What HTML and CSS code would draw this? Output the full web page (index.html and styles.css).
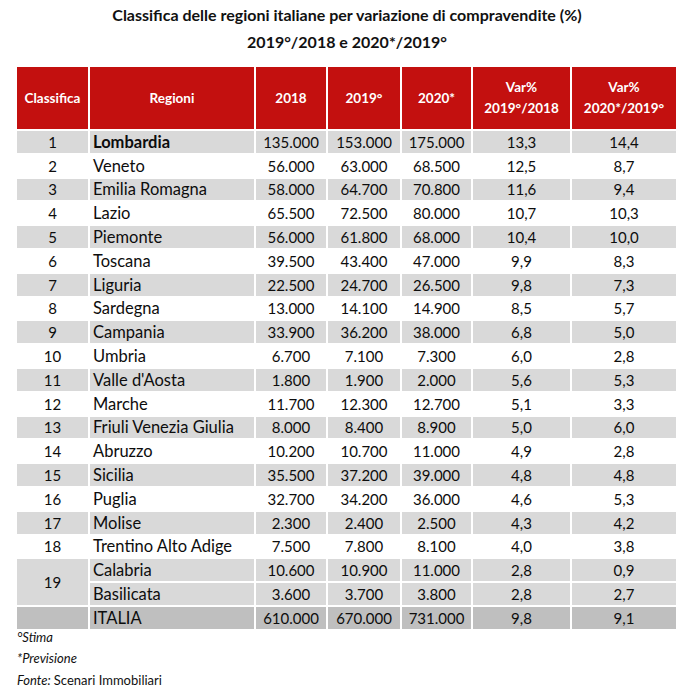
FILE: index.html
```html
<!DOCTYPE html>
<html lang="it">
<head>
<meta charset="utf-8">
<title>Classifica regioni</title>
<link rel="stylesheet" href="styles.css">
</head>
<body>
<div class="page">
  <h1 class="title">Classifica delle regioni italiane per variazione di compravendite (%)<br>2019°/2018 e 2020*/2019°</h1>
  <table class="tbl">
    <colgroup>
      <col class="c1"><col class="c2"><col class="c3"><col class="c4"><col class="c5"><col class="c6"><col class="c7">
    </colgroup>
    <thead>
      <tr>
        <th>Classifica</th><th>Regioni</th><th>2018</th><th>2019°</th><th>2020*</th><th>Var%<br>2019°/2018</th><th>Var%<br>2020*/2019°</th>
      </tr>
    </thead>
    <tbody>
      <tr class="g"><td>1</td><td class="reg b">Lombardia</td><td>135.000</td><td>153.000</td><td>175.000</td><td>13,3</td><td>14,4</td></tr>
      <tr><td>2</td><td class="reg">Veneto</td><td>56.000</td><td>63.000</td><td>68.500</td><td>12,5</td><td>8,7</td></tr>
      <tr class="g"><td>3</td><td class="reg">Emilia Romagna</td><td>58.000</td><td>64.700</td><td>70.800</td><td>11,6</td><td>9,4</td></tr>
      <tr><td>4</td><td class="reg">Lazio</td><td>65.500</td><td>72.500</td><td>80.000</td><td>10,7</td><td>10,3</td></tr>
      <tr class="g"><td>5</td><td class="reg">Piemonte</td><td>56.000</td><td>61.800</td><td>68.000</td><td>10,4</td><td>10,0</td></tr>
      <tr><td>6</td><td class="reg">Toscana</td><td>39.500</td><td>43.400</td><td>47.000</td><td>9,9</td><td>8,3</td></tr>
      <tr class="g"><td>7</td><td class="reg">Liguria</td><td>22.500</td><td>24.700</td><td>26.500</td><td>9,8</td><td>7,3</td></tr>
      <tr><td>8</td><td class="reg">Sardegna</td><td>13.000</td><td>14.100</td><td>14.900</td><td>8,5</td><td>5,7</td></tr>
      <tr class="g"><td>9</td><td class="reg">Campania</td><td>33.900</td><td>36.200</td><td>38.000</td><td>6,8</td><td>5,0</td></tr>
      <tr><td>10</td><td class="reg">Umbria</td><td>6.700</td><td>7.100</td><td>7.300</td><td>6,0</td><td>2,8</td></tr>
      <tr class="g"><td>11</td><td class="reg">Valle d'Aosta</td><td>1.800</td><td>1.900</td><td>2.000</td><td>5,6</td><td>5,3</td></tr>
      <tr><td>12</td><td class="reg">Marche</td><td>11.700</td><td>12.300</td><td>12.700</td><td>5,1</td><td>3,3</td></tr>
      <tr class="g"><td>13</td><td class="reg">Friuli Venezia Giulia</td><td>8.000</td><td>8.400</td><td>8.900</td><td>5,0</td><td>6,0</td></tr>
      <tr><td>14</td><td class="reg">Abruzzo</td><td>10.200</td><td>10.700</td><td>11.000</td><td>4,9</td><td>2,8</td></tr>
      <tr class="g"><td>15</td><td class="reg">Sicilia</td><td>35.500</td><td>37.200</td><td>39.000</td><td>4,8</td><td>4,8</td></tr>
      <tr><td>16</td><td class="reg">Puglia</td><td>32.700</td><td>34.200</td><td>36.000</td><td>4,6</td><td>5,3</td></tr>
      <tr class="g"><td>17</td><td class="reg">Molise</td><td>2.300</td><td>2.400</td><td>2.500</td><td>4,3</td><td>4,2</td></tr>
      <tr><td>18</td><td class="reg">Trentino Alto Adige</td><td>7.500</td><td>7.800</td><td>8.100</td><td>4,0</td><td>3,8</td></tr>
      <tr class="g"><td rowspan="2">19</td><td class="reg">Calabria</td><td>10.600</td><td>10.900</td><td>11.000</td><td>2,8</td><td>0,9</td></tr>
      <tr class="g"><td class="reg">Basilicata</td><td>3.600</td><td>3.700</td><td>3.800</td><td>2,8</td><td>2,7</td></tr>
      <tr class="tot"><td></td><td class="reg">ITALIA</td><td>610.000</td><td>670.000</td><td>731.000</td><td>9,8</td><td>9,1</td></tr>
    </tbody>
  </table>
  <div class="notes">
    <p>°Stima</p>
    <p>*Previsione</p>
    <p>Fonte: <span class="src">Scenari Immobiliari</span></p>
  </div>
</div>
</body>
</html>
```

FILE: styles.css
```css
html, body {
  margin: 0;
  padding: 0;
  background: #ffffff;
}

.page {
  width: 694px;
  padding: 1px 0 0 15px;
  box-sizing: border-box;
  font-family: Lato, "Open Sans", sans-serif;
  color: #0d0d0d;
}

.title {
  margin: 0 0 10px -15px;
  width: 694px;
  text-align: center;
  font-size: 16px;
  font-weight: 700;
  line-height: 27px;
  color: #111111;
}

.tbl {
  border-collapse: separate;
  border-spacing: 2px;
  table-layout: fixed;
  width: 663px;
  background: #ffffff;
}

.c1 { width: 71px; }
.c2 { width: 164px; }
.c3 { width: 70px; }
.c4 { width: 72px; }
.c5 { width: 69px; }
.c6 { width: 97px; }
.c7 { width: 104px; }

.tbl th {
  background: #c3100f;
  color: #ffffff;
  font-size: 13.5px;
  font-weight: 700;
  line-height: 21px;
  height: 62px;
  padding: 0;
  text-align: center;
  vertical-align: middle;
}

.tbl td {
  height: 21.8px;
  padding: 0;
  font-size: 15px;
  line-height: 18px;
  text-align: center;
  vertical-align: middle;
  white-space: nowrap;
}

.tbl .reg {
  text-align: left;
  padding-left: 3px;
  font-size: 16.5px;
}

.tbl .b {
  font-weight: 700;
}

.tbl tr.g td {
  background: #d9d9d9;
}

.tbl tr.tot td {
  background: #bfbfbf;
}

.notes {
  margin-top: -4px;
  padding-left: 2px;
  font-size: 13px;
  font-style: italic;
  line-height: 21.5px;
  color: #111111;
}

.notes p {
  margin: 0;
}

.notes .src {
  font-style: normal;
}
```
